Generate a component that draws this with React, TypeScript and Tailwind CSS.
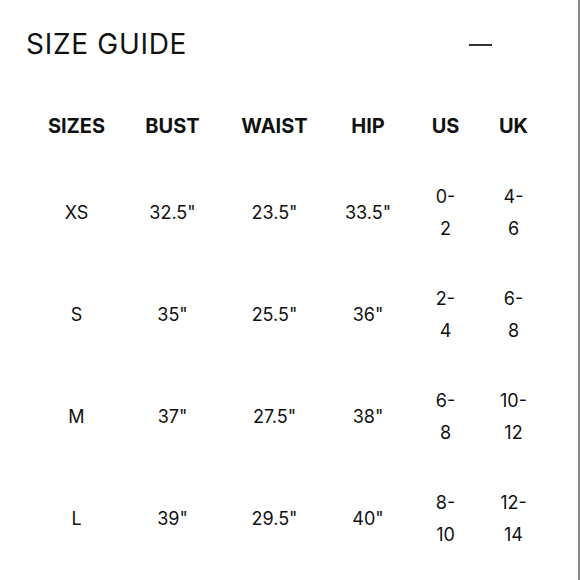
import React from "react";

const rows: { size: string; bust: string; waist: string; hip: string; us: [string, string]; uk: [string, string] }[] = [
  { size: "XS", bust: '32.5"', waist: '23.5"', hip: '33.5"', us: ["0-", "2"], uk: ["4-", "6"] },
  { size: "S", bust: '35"', waist: '25.5"', hip: '36"', us: ["2-", "4"], uk: ["6-", "8"] },
  { size: "M", bust: '37"', waist: '27.5"', hip: '38"', us: ["6-", "8"], uk: ["10-", "12"] },
  { size: "L", bust: '39"', waist: '29.5"', hip: '40"', us: ["8-", "10"], uk: ["12-", "14"] },
];

const cols = "grid grid-cols-[97px_95px_109px_78px_77px_59px] ml-[28px]";

export default function App() {
  return (
    <div
      className="w-[580px] h-[580px] bg-white border-r-2 border-[#8a8a8a] overflow-hidden text-[#111]"
      style={{ fontFamily: "Inter, 'Open Sans', sans-serif" }}
    >
      <div className="flex items-center justify-between h-[90px] pl-[26px] pr-[86px] pb-[2px]">
        <h1 className="text-[28px] leading-[34px] font-normal tracking-[0.7px]">SIZE GUIDE</h1>
        <div className="w-[23px] h-[2px] bg-[#333] mt-[2px]" />
      </div>
      <div className={`${cols} h-[72px] items-center text-center text-[20px] leading-[28px] font-bold`}>
        <div>SIZES</div>
        <div>BUST</div>
        <div>WAIST</div>
        <div>HIP</div>
        <div>US</div>
        <div>UK</div>
      </div>
      {rows.map((r) => (
        <div
          key={r.size}
          className={`${cols} h-[102px] items-center text-center text-[18px] leading-[32px] font-normal`}
        >
          <div>{r.size}</div>
          <div>{r.bust}</div>
          <div>{r.waist}</div>
          <div>{r.hip}</div>
          <div className="flex flex-col">
            <span>{r.us[0]}</span>
            <span>{r.us[1]}</span>
          </div>
          <div className="flex flex-col">
            <span>{r.uk[0]}</span>
            <span>{r.uk[1]}</span>
          </div>
        </div>
      ))}
    </div>
  );
}
